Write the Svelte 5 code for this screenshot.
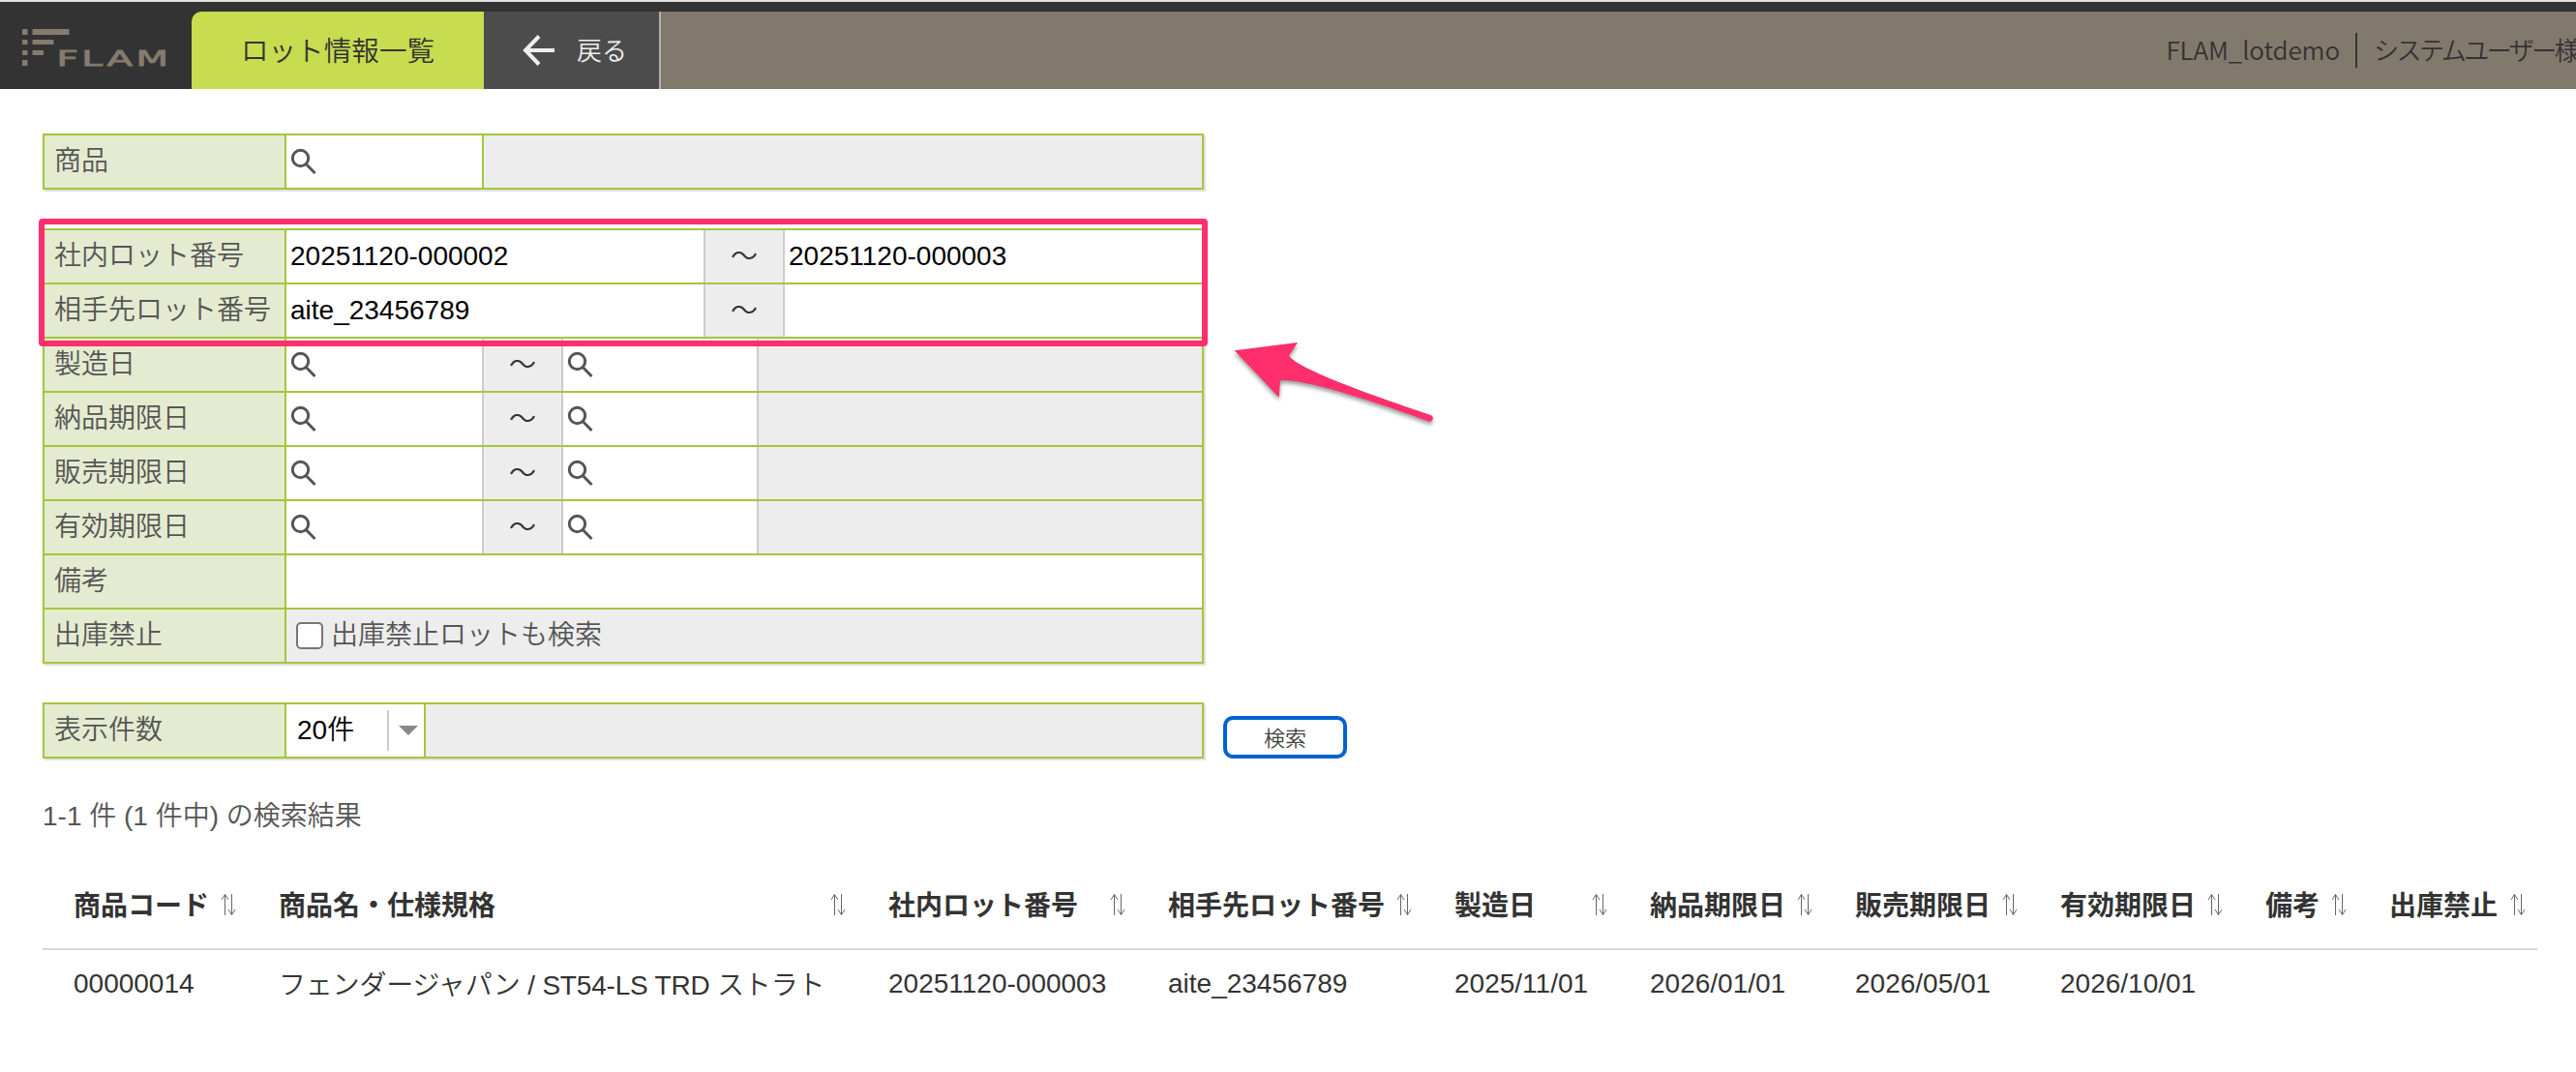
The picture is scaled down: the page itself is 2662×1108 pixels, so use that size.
<script lang="ts">
  type Range = { label: string; from: string; to: string }

  const lotRanges: Range[] = [
    { label: '社内ロット番号', from: '20251120-000002', to: '20251120-000003' },
    { label: '相手先ロット番号', from: 'aite_23456789', to: '' },
  ]
  const dateLabels = ['製造日', '納品期限日', '販売期限日', '有効期限日']

  const columns = [
    { label: '商品コード', width: 212 },
    { label: '商品名・仕様規格', width: 630 },
    { label: '社内ロット番号', width: 289 },
    { label: '相手先ロット番号', width: 296 },
    { label: '製造日', width: 202 },
    { label: '納品期限日', width: 212 },
    { label: '販売期限日', width: 212 },
    { label: '有効期限日', width: 212 },
    { label: '備考', width: 128 },
    { label: '出庫禁止', width: 185 },
  ]
  const rows = [
    ['00000014', 'フェンダージャパン / ST54-LS TRD ストラト', '20251120-000003', 'aite_23456789', '2025/11/01', '2026/01/01', '2026/05/01', '2026/10/01', '', ''],
  ]

  let includeBlocked = $state(false)
</script>

{#snippet lens()}
  <svg class="lens" viewBox="0 0 28 28" width="28" height="28">
    <circle cx="10.5" cy="10.5" r="8.2" />
    <path d="M16.5 16.8 L25.5 26" />
  </svg>
{/snippet}

<header>
  <div class="logo">
    <svg viewBox="0 0 170 54" width="170" height="54">
      <path d="M3 4h5.500v6H3zM13.500 4h38v6h-38zM3 15h5.500v5H3zM13.500 15h22v5h-22zM3 26h5.500v5H3zM13.500 26h11.500v5H13.500zM3 36h5.500v6H3z" />
      <text x="38.5" y="42" textLength="119" lengthAdjust="spacingAndGlyphs">FLAM</text>
    </svg>
  </div>
  <div class="tab">ロット情報一覧</div>
  <div class="back">
    <svg viewBox="0 0 34 34" width="34" height="34"><path d="M33 17H3M17 2.500L3 17l14 14.500" /></svg>
    <span>戻る</span>
  </div>
  <div class="user">
    <span class="company">FLAM_lotdemo</span>
    <span class="divider"></span>
    <span class="name">システムユーザー様</span>
  </div>
</header>

<main>
  <section class="box">
    <div class="row">
      <div class="label">商品</div>
      <div class="field code green">{@render lens()}</div>
      <div class="rest"></div>
    </div>
  </section>

  <section class="box lots">
    {#each lotRanges as r (r.label)}
      <div class="row">
        <div class="label">{r.label}</div>
        <div class="field lot">{r.from}</div>
        <div class="tilde">〜</div>
        <div class="field grow">{r.to}</div>
      </div>
    {/each}
    {#each dateLabels as label (label)}
      <div class="row">
        <div class="label">{label}</div>
        <div class="field code">{@render lens()}</div>
        <div class="tilde">〜</div>
        <div class="field code">{@render lens()}</div>
        <div class="rest"></div>
      </div>
    {/each}
    <div class="row">
      <div class="label">備考</div>
      <div class="field grow"></div>
    </div>
    <div class="row">
      <div class="label">出庫禁止</div>
      <label class="rest check">
        <input type="checkbox" bind:checked={includeBlocked} />
        <span>出庫禁止ロットも検索</span>
      </label>
    </div>

    <div class="highlight"></div>
    <svg class="pointer" viewBox="0 0 220 96" width="220" height="96">
      <path d="M5.700 12.300L71 4L62 17.600C68 29 128 52 209.500 79.500Q213 83 208 86C158 68 84 42 53 43L51.700 60.700Z" />
    </svg>
  </section>

  <div class="actions">
    <section class="box">
      <div class="row">
        <div class="label">表示件数</div>
        <div class="select"><span>20件</span><i></i></div>
        <div class="rest"></div>
      </div>
    </section>
    <button type="button">検索</button>
  </div>

  <p class="count">1-1 件 (1 件中) の検索結果</p>

  <table>
    <colgroup>
      {#each columns as c (c.label)}<col style="width: {c.width}px" />{/each}
    </colgroup>
    <thead>
      <tr>
        {#each columns as c (c.label)}
          <th>
            <div>
              <span>{c.label}</span>
              <svg class="sort" viewBox="0 0 16 24" width="16" height="24"><path d="M4.500 23V1.500M1 7l3.500-5.500L8 7M11.500 1v21.500M8 17l3.500 5.500L15 17" /></svg>
            </div>
          </th>
        {/each}
      </tr>
    </thead>
    <tbody>
      {#each rows as row, i (i)}
        <tr>
          {#each row as cell, j (j)}<td>{cell}</td>{/each}
        </tr>
      {/each}
    </tbody>
  </table>
</main>

<style>
  :global(body) { background: #fff; overflow: hidden; }
  :global(#app) { font-family: "Liberation Sans", "Noto Sans CJK JP", sans-serif; font-size: 28px; color: #555; }

  header { display: flex; height: 80px; padding-top: 10px; border-top: 2px solid #e0e0e0; background: #333; overflow: hidden; white-space: nowrap; font-family: "Noto Sans CJK JP", sans-serif; font-weight: 350; }
  .logo { width: 198px; box-sizing: border-box; padding: 14px 0 0 20px; flex: none; }
  .logo svg { display: block; fill: #857b6e; overflow: visible; }
  .logo text { font: 22px "DejaVu Sans", sans-serif; letter-spacing: 2px; stroke: #857b6e; stroke-width: .8px; }
  .tab { width: 302px; line-height: 77px; text-align: center; background: #c7dc4f; color: #333; border-radius: 10px 0 0 0; font-size: 28.6px; flex: none; }
  .back { display: flex; align-items: center; gap: 22px; width: 141px; padding-left: 40px; background: #4c4c4c; color: #eee; border-right: 2px solid #b0b0b0; font-size: 26px; flex: none; }
  .back svg { fill: none; stroke: #eee; stroke-width: 4; }
  .back span { line-height: 36px; padding-bottom: 3px; }
  .user { flex: 1; display: flex; align-items: center; justify-content: flex-end; background: #82796d; color: #333; font-size: 26px; min-width: 0; }
  .user span { line-height: 36px; }
  .company, .name { padding-bottom: 3px; }
  .company { letter-spacing: -.1px; }
  .divider { width: 2px; height: 36px; margin: 0 17px 0 16px; background: #333; }
  .name { width: 209px; letter-spacing: -2.5px; }

  main { padding: 46px 40px 0 44px; }
  .box { position: relative; width: 1200px; box-sizing: border-box; border: 2px solid #a4c63c; box-shadow: 2px 2px 0 #e0e0e0; }
  .row { display: flex; height: 54px; line-height: 54px; }
  .row + .row { border-top: 2px solid #a4c63c; }
  .lots { margin: 40px 0; }
  .label { width: 238px; padding-left: 10px; background: #e4ebd0; border-right: 2px solid #a4c63c; font-weight: 350; white-space: nowrap; flex: none; }
  .field { padding-left: 4px; color: #000; background: #fff; }
  .code { display: flex; align-items: center; width: 198px; }
  .code.green { border-right: 2px solid #a4c63c; }
  .lot { width: 427px; }
  .grow { flex: 1; }
  .tilde { width: 80px; border: solid #ccc; border-width: 0 2px; background: #ededed; color: #333; text-align: center; line-height: 51px; font-family: "Noto Sans CJK JP", sans-serif; font-weight: 350; }
  .rest { flex: 1; background: #ededed; }
  .tilde + .code { border-right: 2px solid #ccc; width: 196px; }
  .lens { fill: none; stroke: #555; stroke-width: 3; }
  .check { display: flex; align-items: center; font-weight: 350; }
  .check input { appearance: none; width: 28px; height: 28px; margin: 0 8px 0 10px; border: 2px solid #767676; border-radius: 5px; background: #fff; }

  .highlight { position: absolute; left: -6px; top: -12px; width: 1196px; height: 120px; border: 6px solid #ff2e6c; border-radius: 4px; }
  .pointer { position: absolute; left: 1224px; top: 112px; fill: #ff2e6c; filter: drop-shadow(0 3px 2px rgba(0, 0, 0, .4)); overflow: visible; }

  .actions { display: flex; align-items: flex-end; gap: 20px; }
  .select { display: flex; align-items: center; width: 144px; box-sizing: border-box; padding-left: 11px; background: #fff; color: #000; border-right: 2px solid #a4c63c; font-weight: 350; }
  .select span { width: 93px; height: 42px; line-height: 42px; border-right: 2px solid #ccc; }
  .select i { margin-left: 10px; border: 10px solid transparent; border-top-color: #888; border-bottom: 0; }
  button { width: 128px; height: 44px; padding: 0 0 3px; border: 4px solid #0062d1; border-radius: 10px; background: #fff; color: #444; font: 350 22px/32px "Noto Sans CJK JP", sans-serif; }

  .count { margin: 40px 0 0; line-height: 40px; font-weight: 350; }
  table { width: 2578px; margin-top: 26px; border-collapse: collapse; table-layout: fixed; color: #333; white-space: nowrap; }
  th, td { padding: 0 12px 0 32px; text-align: left; }
  th { height: 90px; border-bottom: 2px solid #d8d8d8; }
  th div { display: flex; align-items: center; justify-content: space-between; }
  th span { padding-bottom: 2px; }
  td { height: 72px; box-sizing: border-box; padding-bottom: 2px; font-weight: 350; }
  td:nth-child(2) { padding-bottom: 4px; letter-spacing: -.2px; }
  .sort { fill: none; stroke: #666; stroke-width: 1; flex: none; }
</style>
